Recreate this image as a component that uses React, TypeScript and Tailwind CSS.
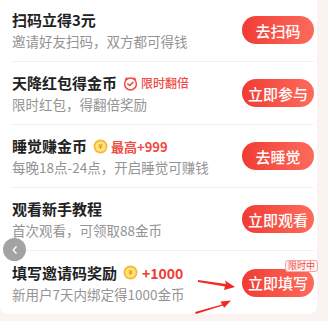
import React from 'react';

const ClockIcon = () => (
    <svg width="15" height="15" viewBox="0 0 16 16" fill="none">
        <circle cx="8" cy="8.5" r="6.3" stroke="#f04a44" strokeWidth="1.6" />
        <path d="M5.2 8.6 L7.4 10.2 L10.6 6.8" stroke="#f04a44" strokeWidth="1.6" strokeLinecap="round" strokeLinejoin="round" />
        <path d="M2.6 3.4 L4.2 2 M13.4 3.4 L11.8 2" stroke="#f04a44" strokeWidth="1.4" strokeLinecap="round" />
    </svg>
);

const CoinIcon = () => (
    <svg width="15" height="15" viewBox="0 0 16 16">
        <circle cx="8" cy="8" r="7.4" fill="#f7b733" />
        <circle cx="8" cy="8" r="5.6" fill="#ffe27a" />
        <text x="8" y="11" textAnchor="middle" fontSize="8" fontWeight="700" fill="#e8961e" fontFamily="Liberation Sans, sans-serif">¥</text>
    </svg>
);

type Task = {
    title: string;
    desc: string;
    action: string;
    extra?: React.ReactNode;
    tag?: string;
};

const tasks: Task[] = [
    { title: '扫码立得3元', desc: '邀请好友扫码，双方都可得钱', action: '去扫码' },
    {
        title: '天降红包得金币',
        desc: '限时红包，得翻倍奖励',
        action: '立即参与',
        extra: (
            <span className="flex items-center gap-[3px] ml-[6px]">
                <ClockIcon />
                <span className="text-[12px] leading-none text-[#f04a44] font-medium">限时翻倍</span>
            </span>
        ),
    },
    {
        title: '睡觉赚金币',
        desc: '每晚18点-24点，开启睡觉可赚钱',
        action: '去睡觉',
        extra: (
            <span className="flex items-center gap-[3px] ml-[6px]">
                <CoinIcon />
                <span className="text-[13px] leading-none text-[#f04a44] font-bold">最高+999</span>
            </span>
        ),
    },
    { title: '观看新手教程', desc: '首次观看，可领取88金币', action: '立即观看' },
    {
        title: '填写邀请码奖励',
        desc: '新用户7天内绑定得1000金币',
        action: '立即填写',
        tag: '限时中',
        extra: (
            <span className="flex items-center gap-[4px] ml-[6px]">
                <CoinIcon />
                <span className="text-[14px] leading-none text-[#ee3b36] font-bold">+1000</span>
            </span>
        ),
    },
];

export default function App() {
    return (
        <div
            className="relative w-[328px] h-[321px] overflow-hidden bg-[#faf3f1]"
            style={{ fontFamily: '"Noto Sans CJK SC", "Noto Sans", sans-serif' }}
        >
            <div className="w-[317px] bg-white rounded-b-[8px] pl-[12px] pr-[3px] mt-[-1px]">
                {tasks.map((t, i) => (
                    <div
                        key={t.title}
                        className={`h-[63px] flex items-center justify-between ${i < tasks.length - 1 ? 'border-b border-[#f0f0f0]' : ''}`}
                    >
                        <div className="flex flex-col">
                            <div className="flex items-center h-[22px]">
                                <span className="text-[15px] leading-[22px] font-bold text-[#222]">{t.title}</span>
                                {t.extra}
                            </div>
                            <span className="text-[13.5px] leading-[20px] text-[#949494]">{t.desc}</span>
                        </div>
                        <div className="relative">
                            <button className="w-[72px] h-[28px] rounded-full bg-gradient-to-r from-[#f13a33] to-[#fd6a5c] text-white text-[15px] leading-none font-medium">
                                {t.action}
                            </button>
                            {t.tag && (
                                <span className="absolute right-[-4px] top-[-9px] px-[2px] h-[12px] flex items-center text-[9px] leading-none text-[#f04a44] bg-[#fff4f3] border border-[#f6a9a4] rounded-[3px]">
                                    {t.tag}
                                </span>
                            )}
                        </div>
                    </div>
                ))}
            </div>

            <div className="absolute left-[3px] top-[238px] w-[23px] h-[23px] rounded-full bg-[#8c8c8c]/80 flex items-center justify-center">
                <svg width="10" height="10" viewBox="0 0 10 10" fill="none">
                    <path d="M6.2 1.8 L3.2 5 L6.2 8.2" stroke="#fff" strokeWidth="1.3" strokeLinecap="round" strokeLinejoin="round" />
                </svg>
            </div>

            <svg className="absolute left-0 top-0" width="328" height="321" viewBox="0 0 328 321">
                <polygon points="198,280 226,284 225,280.5 235,287 224,290 225,286.5 198,282" fill="#ee2b26" />
                <polygon points="195,312 222,304.5 220.5,301.5 231,300.5 224,308 223,305.5 196,314" fill="#ee2b26" />
            </svg>
        </div>
    );
}
